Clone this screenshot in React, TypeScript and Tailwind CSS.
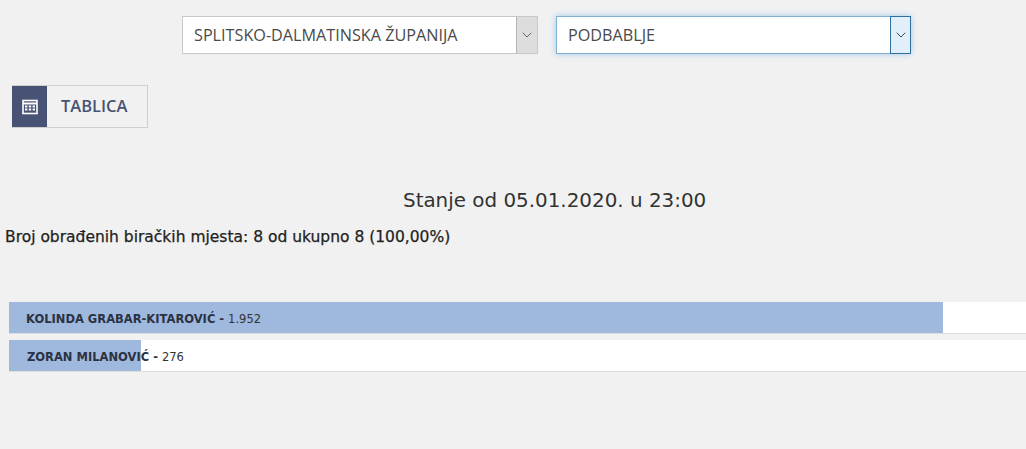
import { ChevronDown } from "lucide-react";

const results = [
  { name: "KOLINDA GRABAR-KITAROVIĆ", votes: "1.952", width: "w-[934px]", pad: "pl-[17px]" },
  { name: "ZORAN MILANOVIĆ", votes: "276", width: "w-[132px]", pad: "pl-[18px]" },
];

function CountySelect({ label, focused }: { label: string; focused?: boolean }) {
  return (
    <div
      className={`flex h-[38px] bg-white border ${
        focused
          ? "w-[355px] border-[#7fb0d6] shadow-[0_0_6px_#9cc8ea]"
          : "w-[356px] border-[#c9c9c9]"
      }`}
    >
      <div className="flex-1 pl-[11px] text-[16.2px] leading-[36px] text-[#4a4a4a] font-['Open_Sans',sans-serif]">
        {label}
      </div>
      <div
        className={`flex w-[21px] items-center justify-center border-l ${
          focused ? "border border-[#2f6f9f] bg-[#e3eff8] -my-px -mr-px" : "border-[#b5b5b5] bg-[#dddddd]"
        }`}
      >
        <ChevronDown
          strokeWidth={1.5}
          className={`size-[16px] ${focused ? "text-[#3a4a5a]" : "text-[#666666]"}`}
        />
      </div>
    </div>
  );
}

export default function App() {
  return (
    <div className="h-[449px] w-[1026px] overflow-hidden bg-[#f1f1f1] font-['DejaVu_Sans',sans-serif]">
      <div className="flex gap-[18px] pl-[182px] pt-[16px]">
        <CountySelect label="SPLITSKO-DALMATINSKA ŽUPANIJA" />
        <CountySelect label="PODBABLJE" focused />
      </div>

      <div className="ml-[12px] mt-[31px] flex h-[43px] w-[136px] border border-[#cfcfcf] border-l-0">
        <div className="flex w-[35px] items-center justify-center bg-[#475274]">
          <svg viewBox="0 0 16 16" className="size-[16px]" fill="none" stroke="#ffffff">
            <rect x="1" y="1.5" width="14" height="13" strokeWidth="1.6" />
            <path d="M1 4.5h14" strokeWidth="2" />
            <path d="M3 7.5h10M3 10.5h10" strokeWidth="2" strokeDasharray="2.4 1.4" />
          </svg>
        </div>
        <div className="pl-[14px] text-[16.5px] font-semibold leading-[40px] text-[#475274] font-['Open_Sans',sans-serif]">
          TABLICA
        </div>
      </div>

      <h2 className="mt-[58px] pl-[403px] text-[19.9px] leading-[30px] text-[#333333]">
        Stanje od 05.01.2020. u 23:00
      </h2>
      <p className="mt-[11px] pl-[5px] text-[15.5px] leading-[20px] text-[#222222] [-webkit-text-stroke:0.25px_#222222]">
        Broj obrađenih biračkih mjesta: 8 od ukupno 8 (100,00%)
      </p>

      <div className="ml-[9px] mt-[55px] flex flex-col gap-[6px]">
        {results.map((r) => (
          <div key={r.name} className="relative h-[32px] border-b border-[#dedede] bg-white">
            <div className={`h-[31px] bg-[#9fb8de] ${r.width}`} />
            <div className={`absolute inset-y-0 left-0 flex items-center pt-[5px] text-[11.5px] text-[#2b3242] ${r.pad}`}>
              <b className="font-bold">{r.name} -&nbsp;</b>
              <span className="text-[#333333] text-[11.5px]">{r.votes}</span>
            </div>
          </div>
        ))}
      </div>
    </div>
  );
}
